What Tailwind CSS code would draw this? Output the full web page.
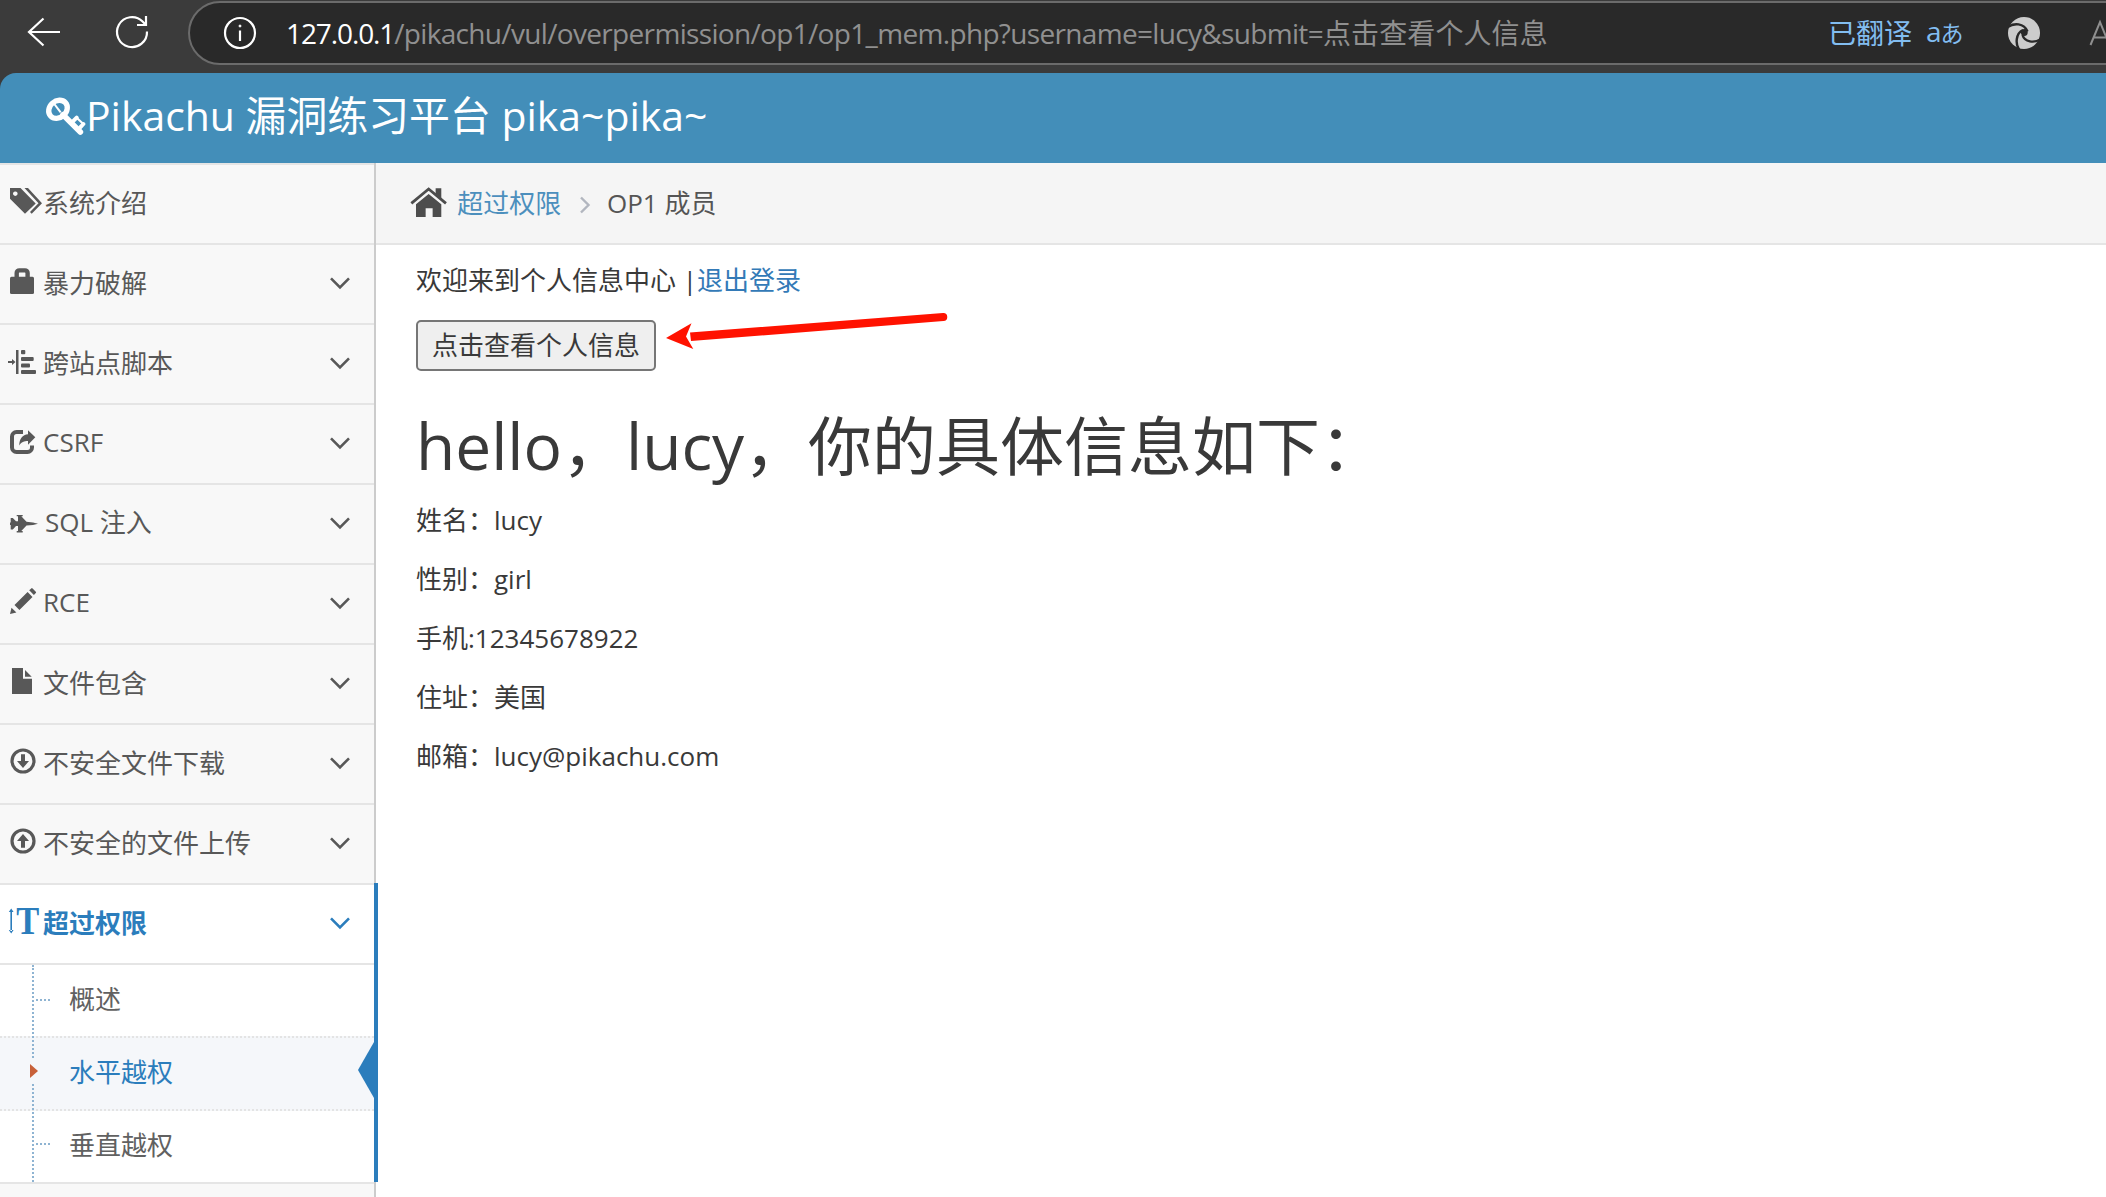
<!DOCTYPE html>
<html lang="zh-CN">
<head>
<meta charset="utf-8">
<title>Pikachu 漏洞练习平台</title>
<script src="https://cdn.jsdelivr.net/npm/@tailwindcss/browser@4"></script>
</head>
<body class="h-[1197px] w-[2106px] overflow-hidden bg-[#3b3b3b] font-['Open_Sans','Noto_Sans_CJK_SC',sans-serif] text-[26px] text-[#393939]">
<div class="relative flex h-[1197px] w-[2106px] flex-col overflow-hidden">

<!-- Browser toolbar -->
<div class="flex h-[73px] shrink-0 items-start text-[28px]">
  <div class="flex h-[64px] w-[188px] shrink-0 items-center">
    <svg class="ml-[26px] h-[36px] w-[36px]" viewBox="0 0 36 36" fill="none" stroke="#fff" stroke-width="2.2"><path d="M34 18H3M17.500 4.500L3 18l14.500 13.500"/></svg>
    <svg class="ml-[52px] h-[36px] w-[36px]" viewBox="0 0 36 36" fill="none" stroke="#fff" stroke-width="2.2"><path d="M33 17.500A15 15 0 1 1 28.600 7.500L31 10M32 2v9h-9"/></svg>
  </div>
  <div class="mt-px flex h-[64px] w-[2000px] shrink-0 items-center rounded-l-full border-2 border-[#6b6b6b] bg-[#292929]">
    <svg class="ml-[33px] h-[34px] w-[34px] shrink-0" viewBox="0 0 34 34" fill="none" stroke="#fff" stroke-width="2.2"><circle cx="17" cy="17" r="15"/><path d="M17 14.500V25"/><circle cx="17" cy="10" r="1" fill="#fff" stroke-width="1"/></svg>
    <div class="ml-[29px] flex w-[1542px] shrink-0 items-center whitespace-nowrap pb-px text-[#909090]"><span class="tracking-[-1.1px] text-white">127.0.0.1</span><span class="tracking-[-0.67px]">/pikachu/vul/overpermission/op1/op1_mem.php?username=lucy&amp;submit=</span><span class="tracking-[0.1px]">点击查看个人信息</span></div>
    <span class="w-[98px] shrink-0 text-[#82bdf0]">已翻译</span>
    <span class="flex w-[82px] shrink-0 items-baseline whitespace-nowrap pb-1 text-[#82bdf0]"><span class="text-[28px] leading-none">a</span><span class="-ml-px font-['Noto_Sans_CJK_JP'] text-[23px] leading-none">あ</span></span>
    <svg class="h-[32px] w-[32px] shrink-0" viewBox="0 0 32 32"><circle cx="16" cy="16" r="16" fill="#ccc"/><g fill="none" stroke="#292929" stroke-width="2.4"><path d="M-1 10.500C6 5.500 16 6 19.500 14.500"/><path d="M33 22C26 26.500 16.500 25 14.500 18"/><path d="M12 34C6.500 27 8 16 15 13"/></g><circle cx="16.300" cy="15.500" r="3.4" fill="#292929"/></svg>
    <svg class="ml-[49px] h-[28px] w-[22px] shrink-0" viewBox="0 0 22 28" fill="none" stroke="#8f8f8f" stroke-width="2"><path d="M1.500 26L11 3l9.500 23M4.500 18.500h13"/></svg>
  </div>
</div>

<!-- Site header -->
<div class="flex h-[90px] shrink-0 items-center rounded-tl-[16px] bg-[#438eb9] pb-[4px] text-[40.9px] text-white">
  <svg class="ml-[45px] h-[40px] w-[41px]" viewBox="45 35 123 120"><g fill="none" stroke="#fff"><ellipse cx="84" cy="75" rx="30" ry="25" stroke-width="16" transform="rotate(-42 84 75)"/><path d="M99 91L151 143" stroke-width="17" stroke-linecap="round"/><path d="M128 112L140 100M150 130L160 119" stroke-width="12" stroke-linecap="round"/><path d="M140 100L160 119" stroke-width="6"/></g><path d="M72 58L92 84" stroke="#fff" stroke-width="6"/></svg><span class="whitespace-nowrap">Pikachu 漏洞练习平台 pika~pika~</span>
</div>

<div class="flex flex-1 bg-white">
  <!-- Sidebar -->
  <nav class="relative w-[376px] shrink-0 border-r-2 border-[#ccc] bg-[#f8f8f8] text-[#585858]">
    <div class="flex h-[80px] items-center border-t-2 border-[#e5e5e5]">
      <svg class="h-[78px] w-[42px]" viewBox="0 0 42 78" fill="currentColor"><path fill-rule="evenodd" d="M10 23H20.500L35.700 38.500 25 48.700 10 33.700ZM15.300 26.400a2.300 2.300 0 1 0 .01 0Z"/><path d="M24.500 23H28L42 38.300 31.700 48.700 30 47l8.500-8.700Z"/></svg><span class="flex-1 pb-[2px] pl-px">系统介绍</span>
    </div>
    <div class="flex h-[80px] items-center border-t-2 border-[#e5e5e5]">
      <svg class="h-[78px] w-[42px]" viewBox="0 0 42 78" fill="currentColor"><rect x="10" y="31.700" width="24" height="17.300" rx="1.500"/><path d="M16.700 33V28a2.600 2.600 0 0 1 2.600-2.600H25A2.600 2.600 0 0 1 27.600 28v5" fill="none" stroke="currentColor" stroke-width="4.400"/></svg><span class="flex-1 pb-[2px] pl-px">暴力破解</span>
      <svg class="mr-[24px] h-[78px] w-[20px]" viewBox="0 0 20 78" fill="none" stroke="currentColor" stroke-width="2.6"><path d="M1 33.300l9 9 9-9"/></svg>
    </div>
    <div class="flex h-[80px] items-center border-t-2 border-[#e5e5e5]">
      <svg class="h-[78px] w-[42px]" viewBox="0 0 42 78" fill="currentColor"><path d="M16 25h2.500v24H16ZM8 36h4v-2l3.500 3-3.500 3v-2H8Z"/><rect x="21" y="25" width="4.300" height="4.300" rx="1"/><rect x="21" y="32" width="12.700" height="4" rx="1"/><rect x="21" y="38.500" width="9" height="4" rx="1"/><rect x="21" y="45" width="15" height="4" rx="1"/></svg><span class="flex-1 pb-[2px] pl-px">跨站点脚本</span>
      <svg class="mr-[24px] h-[78px] w-[20px]" viewBox="0 0 20 78" fill="none" stroke="currentColor" stroke-width="2.6"><path d="M1 33.300l9 9 9-9"/></svg>
    </div>
    <div class="flex h-[80px] items-center border-t-2 border-[#e5e5e5]">
      <svg class="h-[78px] w-[42px]" viewBox="0 0 42 78" fill="currentColor"><path d="M23 27H16.500A4.500 4.500 0 0 0 12 31.500v11A4.500 4.500 0 0 0 16.500 47h11A4.500 4.500 0 0 0 32 42.500V40.500" fill="none" stroke="currentColor" stroke-width="4"/><path d="M28 25.300l7.300 7-7.300 7.500V36c-4 0-6.500 1-8.800 4.500C19.500 33.500 22.500 29.700 28 29.300Z" stroke="#f8f8f8" stroke-width="1.500" paint-order="stroke"/></svg><span class="flex-1 pb-[3px] pl-px">CSRF</span>
      <svg class="mr-[24px] h-[78px] w-[20px]" viewBox="0 0 20 78" fill="none" stroke="currentColor" stroke-width="2.6"><path d="M1 33.300l9 9 9-9"/></svg>
    </div>
    <div class="flex h-[80px] items-center border-t-2 border-[#e5e5e5]">
      <svg class="h-[78px] w-[44px]" viewBox="0 0 44 78" fill="currentColor"><path d="M38 38.700L33 37.500 26.500 36.800 21.300 31.300H22.700V30H16.700V31.300H18V36.300H16L12.800 33H10.700V37.500H10V39.900H10.700V44.400H12.800L16 41.100H18V46.100H16.700V47.400H22.700V46.100H21.300L26.500 40.600 33 39.900Z"/></svg><span class="flex-1 pb-[3px] pl-px">SQL 注入</span>
      <svg class="mr-[24px] h-[78px] w-[20px]" viewBox="0 0 20 78" fill="none" stroke="currentColor" stroke-width="2.6"><path d="M1 33.300l9 9 9-9"/></svg>
    </div>
    <div class="flex h-[80px] items-center border-t-2 border-[#e5e5e5]">
      <svg class="h-[78px] w-[42px]" viewBox="0 0 42 78" fill="currentColor"><path d="M10 49l1.500-6.300 4.900 4.800ZM14.500 40L27.600 27l4.900 4.900-13.100 13ZM29.200 25.300l2-1.900q.7-.7 1.400 0l3.200 3.300q.7.700 0 1.400l-1.900 2Z"/></svg><span class="flex-1 pb-[3px] pl-px">RCE</span>
      <svg class="mr-[24px] h-[78px] w-[20px]" viewBox="0 0 20 78" fill="none" stroke="currentColor" stroke-width="2.6"><path d="M1 33.300l9 9 9-9"/></svg>
    </div>
    <div class="flex h-[80px] items-center border-t-2 border-[#e5e5e5]">
      <svg class="h-[78px] w-[42px]" viewBox="0 0 42 78" fill="currentColor"><path d="M12 23H23V33.700H32V49H12ZM25 25l6.700 6.700H25Z"/></svg><span class="flex-1 pb-[2px] pl-px">文件包含</span>
      <svg class="mr-[24px] h-[78px] w-[20px]" viewBox="0 0 20 78" fill="none" stroke="currentColor" stroke-width="2.6"><path d="M1 33.300l9 9 9-9"/></svg>
    </div>
    <div class="flex h-[80px] items-center border-t-2 border-[#e5e5e5]">
      <svg class="h-[78px] w-[42px]" viewBox="0 0 42 78" fill="currentColor"><circle cx="23" cy="36" r="11" fill="none" stroke="currentColor" stroke-width="3.200"/><path d="M21 29.300h4V36h4L23 43l-6-7h4Z"/></svg><span class="flex-1 pb-[2px] pl-px">不安全文件下载</span>
      <svg class="mr-[24px] h-[78px] w-[20px]" viewBox="0 0 20 78" fill="none" stroke="currentColor" stroke-width="2.6"><path d="M1 33.300l9 9 9-9"/></svg>
    </div>
    <div class="flex h-[80px] items-center border-t-2 border-[#e5e5e5]">
      <svg class="h-[78px] w-[42px]" viewBox="0 0 42 78" fill="currentColor"><circle cx="23" cy="36" r="11" fill="none" stroke="currentColor" stroke-width="3.200"/><path d="M21 42.700h4V36h4l-6-7-6 7h4Z"/></svg><span class="flex-1 pb-[2px] pl-px">不安全的文件上传</span>
      <svg class="mr-[24px] h-[78px] w-[20px]" viewBox="0 0 20 78" fill="none" stroke="currentColor" stroke-width="2.6"><path d="M1 33.300l9 9 9-9"/></svg>
    </div>
    <div class="flex h-[80px] items-center border-t-2 border-[#e5e5e5] bg-white font-bold text-[#2b7dbc]">
      <svg class="h-[78px] w-[42px]" viewBox="0 0 42 78" fill="currentColor"><path d="M10.400 26h1.600v20h-1.600ZM11.200 23.500l2.400 3.500H8.800ZM11.200 48.500l2.400-3.500H8.800Z"/><text x="16.300" y="49" class="font-['Liberation_Serif'] text-[39.500px] font-bold" textLength="23" lengthAdjust="spacingAndGlyphs">T</text></svg><span class="flex-1 pb-[2px] pl-px">超过权限</span>
      <svg class="mr-[24px] h-[78px] w-[20px]" viewBox="0 0 20 78" fill="none" stroke="currentColor" stroke-width="2.6"><path d="M1 33.300l9 9 9-9"/></svg>
    </div>
    <!-- Submenu -->
    <div class="relative h-[221px] border-y-2 border-[#e5e5e5] bg-white text-[#616161]">
      <div class="flex h-[71px] items-center pb-[2px] pl-[69px]">概述</div>
      <div class="flex h-[75px] items-center border-y-2 border-dotted border-[#e4e4e4] bg-[#f5f7fa] pb-[2px] pl-[69px] text-[#2b7dbc]">水平越权</div>
      <div class="flex h-[71px] items-center pb-[2px] pl-[69px]">垂直越权</div>
      <div class="absolute left-[32px] top-0 h-[93px] border-l-2 border-dotted border-[#8fb4d2]"></div>
      <div class="absolute left-[32px] top-[119px] h-[98px] border-l-2 border-dotted border-[#8fb4d2]"></div>
      <div class="absolute left-[36px] top-[34px] w-[14px] border-t-2 border-dotted border-[#8fb4d2]"></div>
      <div class="absolute left-[36px] top-[178px] w-[14px] border-t-2 border-dotted border-[#8fb4d2]"></div>
      <svg class="absolute left-[30px] top-[99px] h-[14px] w-[8px]" viewBox="0 0 8 14"><path d="M0 0l8 7-8 7Z" fill="#c86139"/></svg>
      <svg class="absolute left-[358px] top-[77px] h-[56px] w-[16px]" viewBox="0 0 16 56"><path d="M16 0v56L0 28Z" fill="#2b7dbc"/></svg>
    </div>
    <div class="absolute left-[374px] top-[720px] h-[299px] w-[4px] bg-[#2b7dbc]"></div>
  </nav>

  <!-- Content -->
  <main class="flex-1">
    <div class="flex h-[82px] items-center border-b-2 border-[#e5e5e5] bg-[#f5f5f5] pl-[34px] text-[#555]">
      <svg class="h-[31.300px] w-[37.300px]" viewBox="30 36 112 94" fill="#4d4d4d"><path d="M34 85L86 42l52 43" fill="none" stroke="#4d4d4d" stroke-width="8.500"/><path d="M107 40h17v34l-17-14ZM48 88l38-31 38 31v38H98v-26H77v26H48Z"/></svg>
      <span class="ml-[10px] text-[#4c8fbd]">超过权限</span>
      <svg class="ml-[18px] mt-[4px] h-[18px] w-[12px]" viewBox="0 0 12 18" fill="none" stroke="#b2b6bf" stroke-width="2.4"><path d="M2 1.500L9.500 9 2 16.500"/></svg>
      <span class="ml-[15.700px]">OP1 成员</span>
    </div>
    <div class="px-[40px] leading-[39px]">
      <p class="mt-4">欢迎来到个人信息中心 |<a class="text-[#337ab7]">退出登录</a></p>
      <button class="mt-[20px] flex h-[51px] w-[240px] items-center justify-center rounded-[5px] border-2 border-[#767676] bg-[#efefef] text-[26px]">点击查看个人信息</button>
      <h1 class="mt-[40px] text-[64px] leading-[70px]">hello，lucy，你的具体信息如下：</h1>
      <div class="mt-[20px] flex flex-col gap-[20px]">
        <p>姓名：lucy</p>
        <p>性别：girl</p>
        <p>手机:12345678922</p>
        <p>住址：美国</p>
        <p>邮箱：lucy@pikachu.com</p>
      </div>
    </div>
  </main>
</div>

<!-- Arrow annotation -->
<svg class="absolute left-[660px] top-[308px] h-[46px] w-[296px]" viewBox="0 0 296 46"><path d="M283 5L30 24.500l1 8.500L283.500 13a4 4 0 0 0-.5-8Z" fill="#ff1200"/><path d="M6 30L31.500 15.300 26 28.500 33.300 41Z" fill="#ff1200"/></svg>
</div>
</body>
</html>
